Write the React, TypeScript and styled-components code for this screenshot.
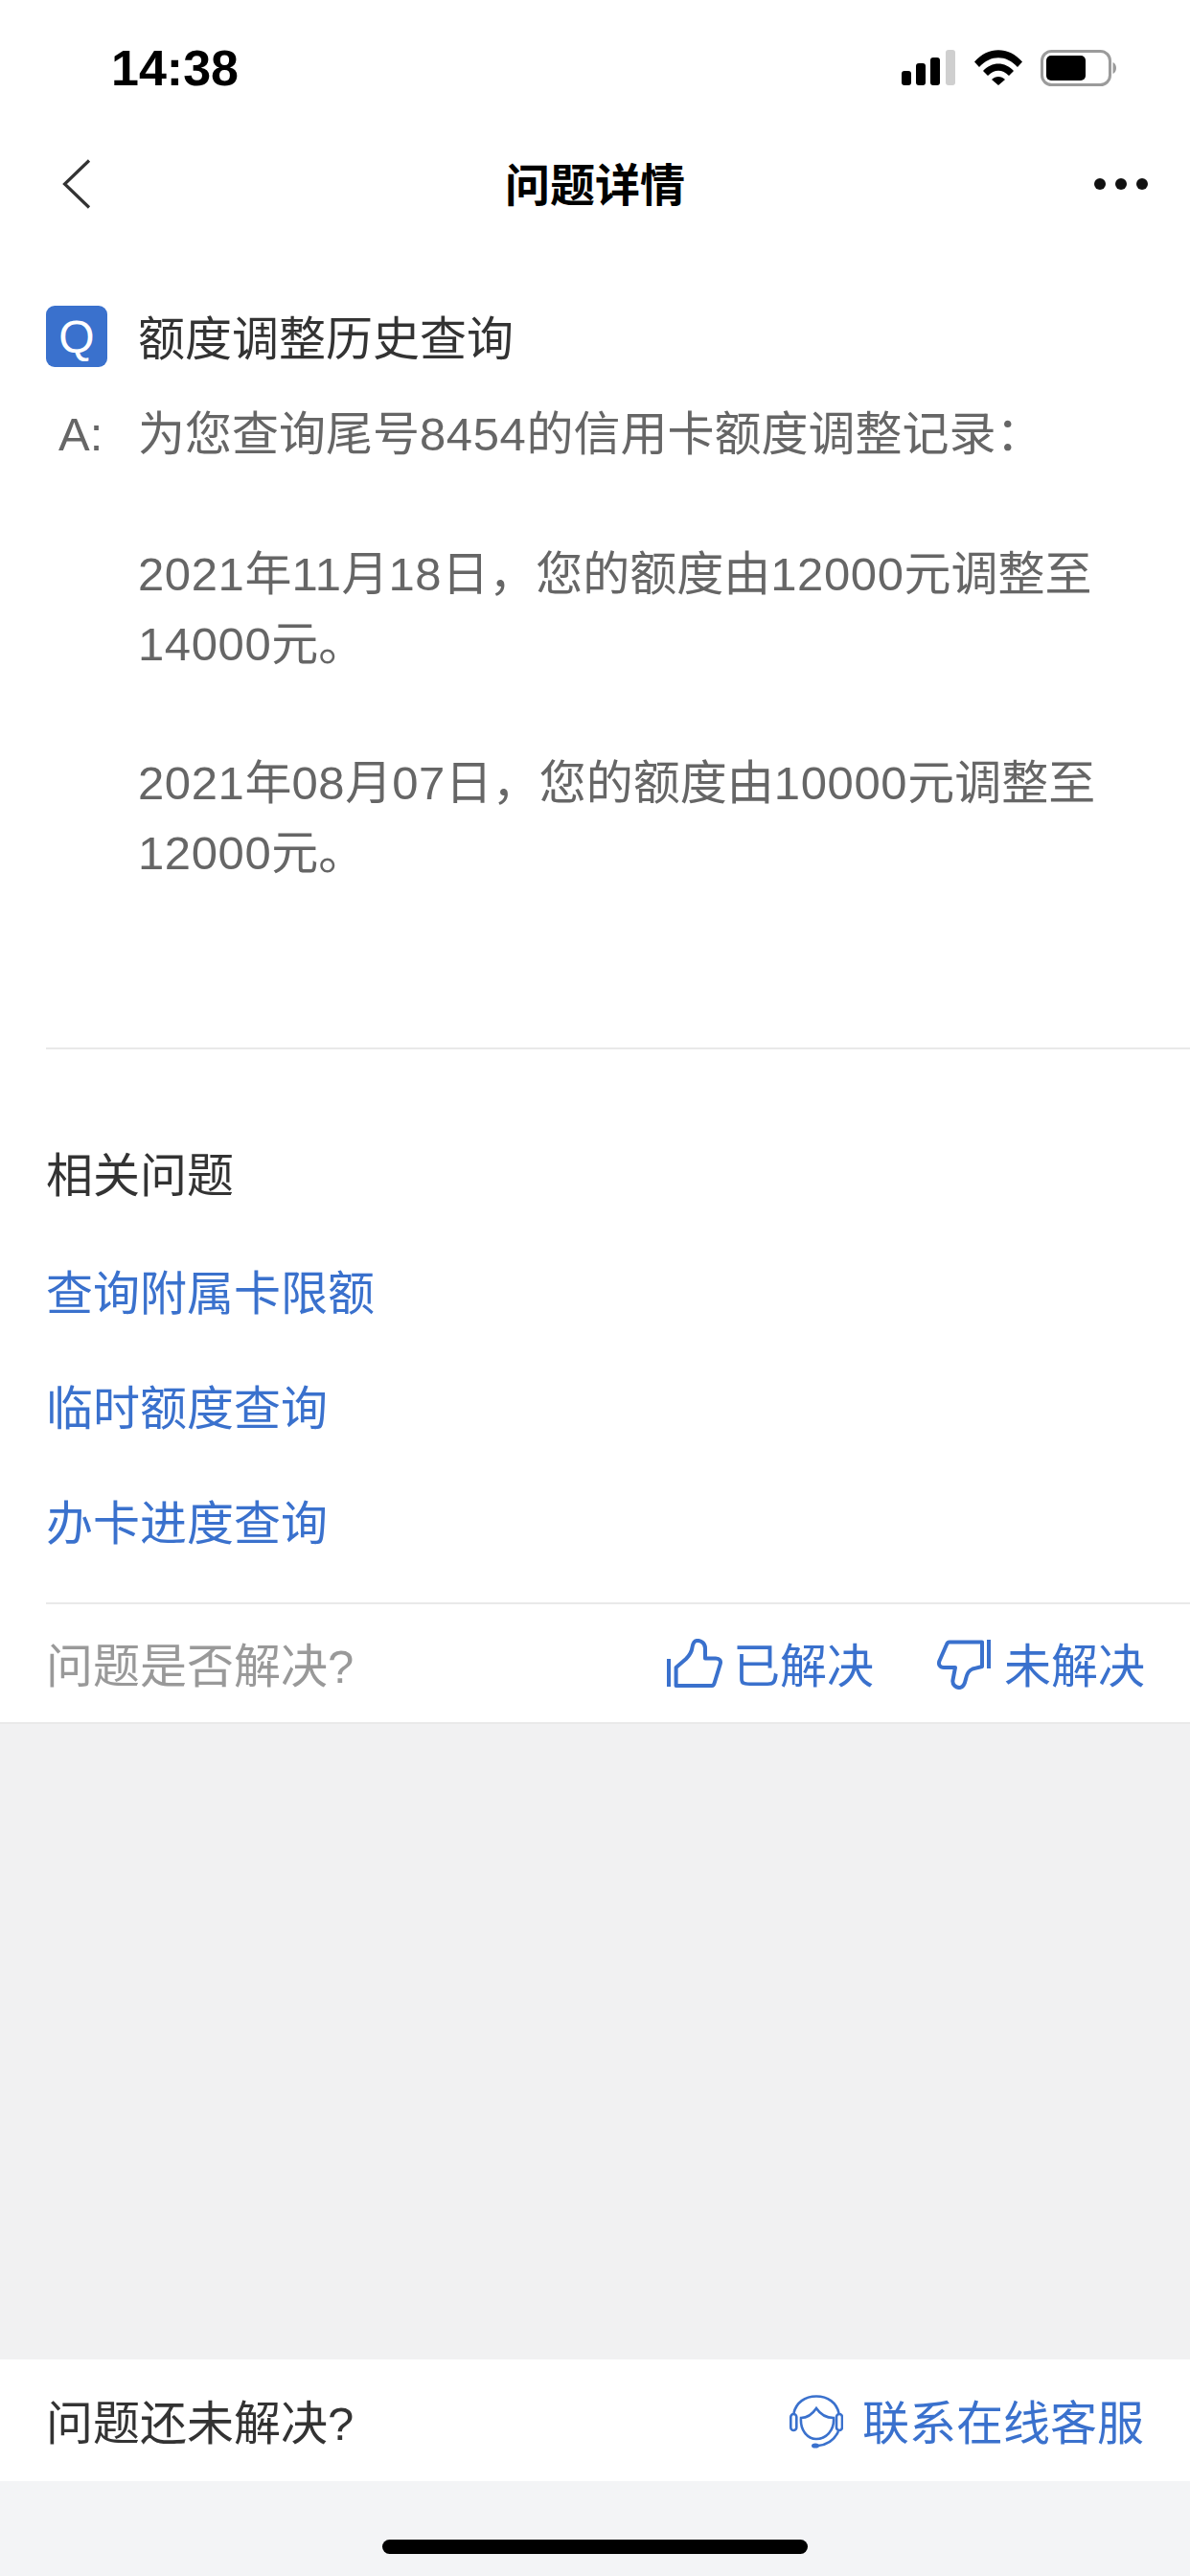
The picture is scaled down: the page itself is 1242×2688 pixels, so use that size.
import styled, { createGlobalStyle } from "styled-components";

const BLUE = "#3a71cd";
const DIVIDER = "#e9e9e9";

const GlobalStyle = createGlobalStyle`
  html, body {
    margin: 0;
    padding: 0;
    background: #fff;
  }
  * {
    box-sizing: border-box;
  }
`;

const Page = styled.div`
  width: 1242px;
  height: 2688px;
  display: flex;
  flex-direction: column;
  background: #fff;
  font-family: "Liberation Sans", "Noto Sans CJK SC", sans-serif;
  font-size: 49px;
  overflow: hidden;
`;

const StatusBar = styled.div`
  height: 140px;
  display: flex;
  align-items: flex-start;
  justify-content: space-between;
  padding: 52px 77px 0 116px;
`;

const Clock = styled.div`
  font-size: 52px;
  font-weight: 700;
  line-height: 38px;
  color: #000;
`;

const StatusIcons = styled.div`
  display: flex;
  align-items: flex-start;
  gap: 19px;
  svg {
    display: block;
  }
`;

const NavBar = styled.div`
  height: 104px;
  display: flex;
  align-items: center;
  justify-content: space-between;
  padding: 0 44px 0 65px;
`;

const NavTitle = styled.div`
  font-size: 47px;
  font-weight: 700;
  color: #000;
  padding-bottom: 6px;
`;

const NavSide = styled.div<{ $width: number; $end?: boolean }>`
  width: ${(p) => p.$width}px;
  display: flex;
  justify-content: ${(p) => (p.$end ? "flex-end" : "flex-start")};
`;

const Dots = styled.div`
  display: flex;
  gap: 10px;
`;

const Dot = styled.span`
  width: 12px;
  height: 12px;
  border-radius: 50%;
  background: #111;
`;

const Qa = styled.section`
  height: 849px;
  padding: 75px 0 0 48px;
`;

const QuestionRow = styled.div`
  display: flex;
  align-items: center;
  gap: 32px;
  height: 64px;
  color: #333;
`;

const QuestionText = styled.div`
  padding-bottom: 3px;
`;

const QBadge = styled.div`
  width: 64px;
  height: 64px;
  border-radius: 9px;
  background: ${BLUE};
  color: #fff;
  display: flex;
  align-items: center;
  justify-content: center;
  font-size: 48px;
`;

const AnswerRow = styled.div`
  display: flex;
  margin-top: 34px;
  color: #666;
  line-height: 73px;
`;

const ALabel = styled.div`
  width: 96px;
  padding-left: 13px;
  flex-shrink: 0;
`;

const AnswerBody = styled.div`
  width: 1010px;
`;

const AnswerPara = styled.p`
  margin: 0 0 72.5px;
`;

// the digits run a little wider than the Liberation ones
const Num = styled.span`
  letter-spacing: 0.6px;
`;

const Related = styled.section`
  margin-left: 48px;
  height: 579px;
  padding-top: 73px;
  border-top: 2px solid ${DIVIDER};
`;

const RelatedTitle = styled.div`
  height: 123px;
  line-height: 118px;
  color: #333;
`;

const RelatedLink = styled.div`
  height: 120px;
  line-height: 118px;
  color: ${BLUE};
`;

const Resolve = styled.div`
  margin-left: 48px;
  height: 125px;
  padding: 0 47px 3px 0;
  display: flex;
  align-items: center;
  border-top: 2px solid ${DIVIDER};
`;

const ResolveHint = styled.div`
  color: #999;
  flex: 1;
`;

const Vote = styled.div<{ $gap: number; $iconGap: number; $iconDrop: number }>`
  display: flex;
  align-items: center;
  gap: ${(p) => p.$iconGap}px;
  color: ${BLUE};
  margin-left: ${(p) => p.$gap}px;
  svg {
    display: block;
    margin-top: ${(p) => p.$iconDrop}px;
  }
`;

const Filler = styled.div`
  flex: 1;
  background: #f1f1f2;
  border-top: 2px solid ${DIVIDER};
`;

const Footer = styled.div`
  height: 127px;
  padding: 0 48px 3px 48px;
  display: flex;
  align-items: center;
  justify-content: space-between;
  color: #333;
`;

const ServiceLink = styled.div`
  display: flex;
  align-items: center;
  gap: 20px;
  color: ${BLUE};
  svg {
    margin-top: 6px;
  }
`;

const HomeArea = styled.div`
  height: 99px;
  background: #f3f4f6;
  display: flex;
  justify-content: center;
  padding-top: 61px;
`;

const HomeBar = styled.div`
  width: 444px;
  height: 15px;
  border-radius: 8px;
  background: #000;
`;

const SignalIcon = () => (
  <svg width="57" height="37" viewBox="0 0 57 37">
    <rect x="0" y="22" width="10" height="15" rx="3" fill="#000" />
    <rect x="15" y="14" width="10" height="23" rx="3" fill="#000" />
    <rect x="30" y="8" width="10" height="29" rx="3" fill="#000" />
    <rect x="46" y="0" width="10" height="37" rx="3" fill="#cfcfcf" />
  </svg>
);

const WifiIcon = () => (
  <svg width="50" height="37" viewBox="0 0 50 37">
    <path d="M0 12.5 C14 -4 36 -4 50 12.5 L45 18 C33 5 17 5 5 18 Z" fill="#000" />
    <path d="M9 22 C18 12 32 12 41 22 L36 27 C29 20 21 20 14 27 Z" fill="#000" />
    <path d="M18 31 C22 27 28 27 32 31 L25 37 Z" fill="#000" />
  </svg>
);

const BatteryIcon = () => (
  <svg width="79" height="38" viewBox="0 0 79 38">
    <rect x="1.5" y="1.5" width="71" height="35" rx="10" fill="none" stroke="#9b9b9b" strokeWidth="3" />
    <rect x="6" y="6" width="41" height="26" rx="5" fill="#000" />
    <path d="M75.5 13 C78 14 79 16.5 79 19 C79 21.5 78 24 75.5 25 Z" fill="#9b9b9b" />
  </svg>
);

const BackIcon = () => (
  <svg width="30" height="52" viewBox="0 0 30 52" fill="none">
    <path d="M28 1.5 L2.5 26 L28 50.5" stroke="#333" strokeWidth="3.2" />
  </svg>
);

const ThumbUpIcon = () => (
  <svg width="58" height="51" viewBox="0 0 58 51" fill="none" stroke={BLUE} strokeWidth="4" strokeLinejoin="round">
    <path d="M2 21 V50" />
    <path d="M9.6 49 H47 C49 49 49.5 47 50 45 L55.5 27 C57 23 55 20.5 51 20.5 H40 V10 C40 4 35 1.5 31 2 C27.5 2.5 27 6 26.5 9 C26 14 24 17 20 21 L9.6 30 Z" />
  </svg>
);

const ThumbDownIcon = () => (
  <svg width="57" height="52" viewBox="0 0 57 52" fill="none" stroke={BLUE} strokeWidth="4" strokeLinejoin="round">
    <path d="M54 0 V30" />
    <path d="M47 2.5 H13 C11 2.5 10.5 3.5 10 5 L2.5 22 C1 26 3 29 7 29 H19 L16.5 42 C15.5 47 20 50.5 24 50 C27.5 49.5 29 46 30 41 C31 36 33 32 37 30.5 L47 28 Z" />
  </svg>
);

const HeadsetIcon = () => (
  <svg width="56" height="56" viewBox="0 0 56 56" fill="none" stroke={BLUE} strokeWidth="2.6">
    <path d="M4.5 19 C7 8 16 1.5 28 1.5 C40 1.5 49 8 51.5 19" />
    <rect x="1.3" y="20" width="6" height="17" rx="3" />
    <rect x="49" y="20" width="6" height="17" rx="3" />
    <path d="M12 24 C19 24 24 20 28 14 C32 20 38 24 46 24 C47 36 39 46 28 46 C18 46 11 36 12 24 Z" />
    <path d="M51 38 C47 47 39 52 30 53" />
    <ellipse cx="27" cy="53" rx="4" ry="2.6" fill={BLUE} stroke="none" />
  </svg>
);

const relatedLinks = ["查询附属卡限额", "临时额度查询", "办卡进度查询"];

const App = () => {
  return (
    <Page>
      <GlobalStyle />
      <StatusBar>
        <Clock>14:38</Clock>
        <StatusIcons>
          <SignalIcon />
          <WifiIcon />
          <BatteryIcon />
        </StatusIcons>
      </StatusBar>
      <NavBar>
        <NavSide $width={57}>
          <BackIcon />
        </NavSide>
        <NavTitle>问题详情</NavTitle>
        <NavSide $width={78} $end>
          <Dots>
            <Dot />
            <Dot />
            <Dot />
          </Dots>
        </NavSide>
      </NavBar>
      <Qa>
        <QuestionRow>
          <QBadge>Q</QBadge>
          <QuestionText>额度调整历史查询</QuestionText>
        </QuestionRow>
        <AnswerRow>
          <ALabel>A:</ALabel>
          <AnswerBody>
            <AnswerPara>
              为您查询尾号<Num>8454</Num>的信用卡额度调整记录：
            </AnswerPara>
            <AnswerPara>
              <Num>2021</Num>年<Num>11</Num>月<Num>18</Num>日，您的额度由<Num>12000</Num>元调整至<Num>14000</Num>元。
            </AnswerPara>
            <AnswerPara>
              <Num>2021</Num>年<Num>08</Num>月<Num>07</Num>日，您的额度由<Num>10000</Num>元调整至<Num>12000</Num>元。
            </AnswerPara>
          </AnswerBody>
        </AnswerRow>
      </Qa>
      <Related>
        <RelatedTitle>相关问题</RelatedTitle>
        {relatedLinks.map((text) => (
          <RelatedLink key={text}>{text}</RelatedLink>
        ))}
      </Related>
      <Resolve>
        <ResolveHint>问题是否解决?</ResolveHint>
        <Vote $gap={0} $iconGap={11} $iconDrop={2}>
          <ThumbUpIcon />
          已解决
        </Vote>
        <Vote $gap={66} $iconGap={13} $iconDrop={5}>
          <ThumbDownIcon />
          未解决
        </Vote>
      </Resolve>
      <Filler />
      <Footer>
        <div>问题还未解决?</div>
        <ServiceLink>
          <HeadsetIcon />
          联系在线客服
        </ServiceLink>
      </Footer>
      <HomeArea>
        <HomeBar />
      </HomeArea>
    </Page>
  );
};

export default App;
